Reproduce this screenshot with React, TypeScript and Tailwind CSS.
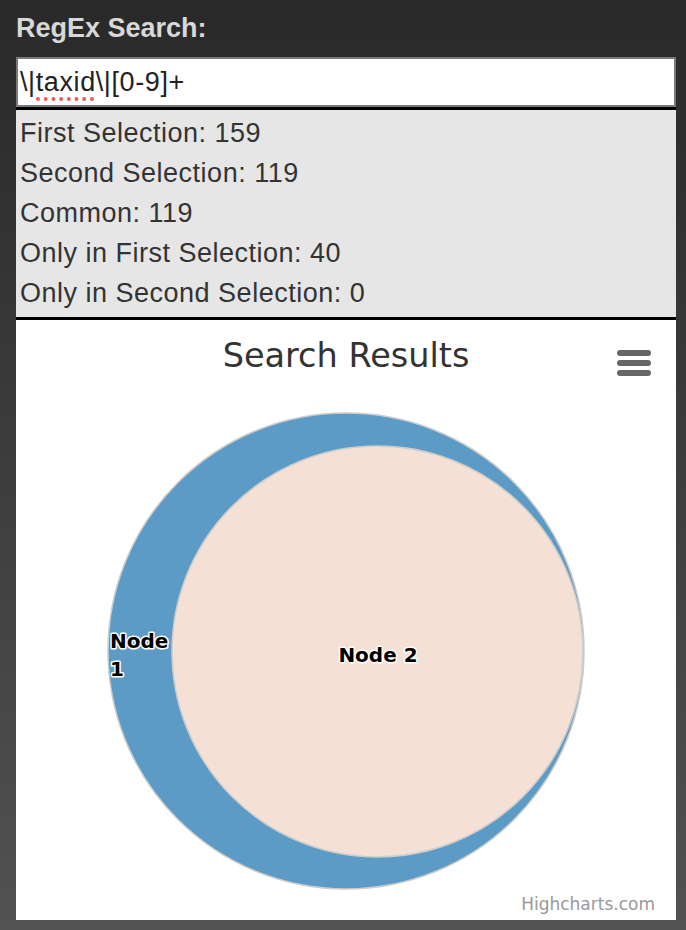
import React from "react";

const stats = [
  "First Selection: 159",
  "Second Selection: 119",
  "Common: 119",
  "Only in First Selection: 40",
  "Only in Second Selection: 0",
];

function VennChart() {
  const labelStyle: React.CSSProperties = {
    paintOrder: "stroke",
  };
  return (
    <svg width="660" height="600" viewBox="0 0 660 600" className="block">
      <text
        x="330"
        y="47"
        textAnchor="middle"
        fill="#333333"
        fontSize="33.5"
        fontFamily="'DejaVu Sans', sans-serif"
      >
        Search Results
      </text>
      <g fill="#666666">
        <rect x="601" y="30" width="34" height="6" rx="3" />
        <rect x="601" y="40" width="34" height="6" rx="3" />
        <rect x="601" y="50" width="34" height="6" rx="3" />
      </g>
      <circle cx="330" cy="331" r="238" fill="#5c9bc5" stroke="#cccccc" strokeWidth="1.5" />
      <circle cx="361.5" cy="331.5" r="205.5" fill="#f4e0d5" stroke="#cccccc" strokeWidth="1.5" />
      <g
        fontFamily="'DejaVu Sans', sans-serif"
        fontWeight="bold"
        fontSize="20"
        fill="#000000"
        stroke="#ffffff"
        strokeWidth="3"
        strokeLinejoin="round"
        style={labelStyle}
      >
        <text x="94" y="328">Node</text>
        <text x="94" y="356">1</text>
        <text x="362" y="342" textAnchor="middle">Node 2</text>
      </g>
      <text
        x="639"
        y="590"
        textAnchor="end"
        fill="#999999"
        fontSize="17"
        fontFamily="'DejaVu Sans', sans-serif"
      >
        Highcharts.com
      </text>
    </svg>
  );
}

export default function App() {
  return (
    <div
      className="min-h-[930px] w-[686px] bg-gradient-to-b from-[#292929] to-[#525252] pl-4 pr-[10px]"
      style={{ fontFamily: "'Liberation Sans', Arial, sans-serif" }}
    >
      <div className="h-[57px] pt-[13px] text-[27px] font-bold leading-[30px] text-[#d8d8d8]">
        RegEx Search:
      </div>
      <div className="flex h-[50px] items-center border-2 border-[#7a7a7a] bg-white px-[2px] text-[27px] tracking-[0.6px] text-[#222]">
        <span>\|</span>
        <span className="relative">
          taxid
          <span className="absolute bottom-[1px] left-0 right-[2px] h-0 border-b-[4px] border-dotted border-[#ee5b5b]" />
        </span>
        <span>\|[0-9]+</span>
      </div>
      <div className="h-[3px] bg-black" />
      <div className="h-[207px] bg-[#e6e6e6] px-1 pt-[3px]">
        {stats.map((s) => (
          <div key={s} className="h-10 text-[27px] leading-10 tracking-[0.5px] text-[#333]">
            {s}
          </div>
        ))}
      </div>
      <div className="h-[3px] bg-black" />
      <div className="bg-white">
        <VennChart />
      </div>
    </div>
  );
}
